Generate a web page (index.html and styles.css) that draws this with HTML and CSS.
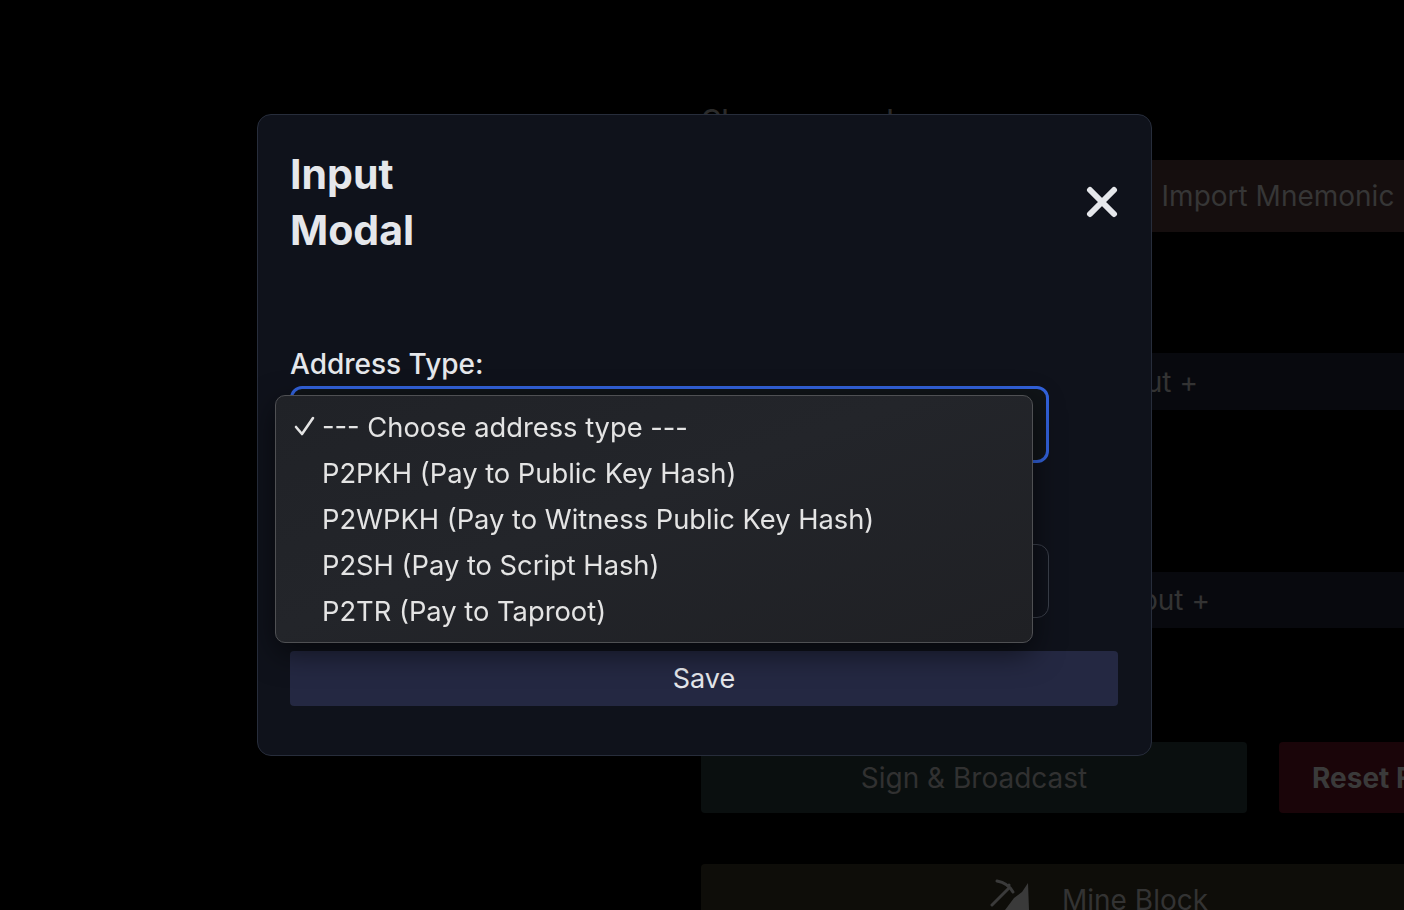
FILE: index.html
```html
<!DOCTYPE html>
<html lang="en">
<head>
<meta charset="utf-8">
<title>Input Modal</title>
<link rel="stylesheet" href="styles.css">
</head>
<body>
<div class="page">
  <h3 class="page-heading">Choose a mode</h3>
  <div class="top-row">
    <button class="bg-btn import-btn">Import Mnemonic</button>
  </div>
  <div class="bar add-input">Add Input +</div>
  <div class="bar add-output">Add Output +</div>
  <div class="actions">
    <button class="bg-btn sign-btn">Sign &amp; Broadcast</button>
    <button class="bg-btn reset-btn">Reset Form</button>
  </div>
  <div class="bar mine-bar">
    <svg class="pick" width="40" height="32" viewBox="0 0 40 32">
      <path d="M7 3 Q18 5 23 14" fill="none" stroke="#3a3a3a" stroke-width="3" stroke-linecap="round"/>
      <path d="M2 27 L19 10" fill="none" stroke="#3a3a3a" stroke-width="3" stroke-linecap="round"/>
      <circle cx="19" cy="7" r="1.6" fill="#3a3a3a"/>
      <path d="M38 5 L39 32 L15 32 L24 20 L32 14 Z" fill="#3a3a3a"/>
    </svg>
    <span>Mine Block</span>
  </div>
</div>

<div class="overlay">
  <div class="modal">
    <div class="modal-header">
      <h2 class="modal-title">Input Modal</h2>
      <button class="close-btn" aria-label="Close">
        <svg width="32" height="32" viewBox="0 0 32 32">
          <path d="M4 4 L28 28 M28 4 L4 28" stroke="#e5e7eb" stroke-width="6" stroke-linecap="round" fill="none"/>
        </svg>
      </button>
    </div>
    <div class="field">
      <label class="field-label">Address Type:</label>
      <div class="select-wrap">
        <div class="select-box"></div>
        <ul class="menu">
          <li class="menu-item checked">
            <svg class="check" width="22" height="22" viewBox="0 0 22 22">
              <path d="M2 11 L8 18 L19 2" fill="none" stroke="#e4e4e4" stroke-width="2.6" stroke-linecap="round" stroke-linejoin="round"/>
            </svg>
            --- Choose address type ---
          </li>
          <li class="menu-item">P2PKH (Pay to Public Key Hash)</li>
          <li class="menu-item">P2WPKH (Pay to Witness Public Key Hash)</li>
          <li class="menu-item">P2SH (Pay to Script Hash)</li>
          <li class="menu-item">P2TR (Pay to Taproot)</li>
        </ul>
      </div>
    </div>
    <div class="field second">
      <div class="text-box"></div>
    </div>
    <button class="save-btn">Save</button>
  </div>
</div>
</body>
</html>
```

FILE: styles.css
```css
* { box-sizing: border-box; }

html, body {
  margin: 0;
  padding: 0;
  background: #000;
  overflow: hidden;
  font-family: Inter, "Liberation Sans", sans-serif;
}

body { width: 1404px; height: 910px; }

/* background page */
.page {
  padding: 100px 0 0 701px;
  width: 1549px;
}

.page-heading {
  margin: 0;
  font-size: 28px;
  line-height: 40px;
  font-weight: 500;
  color: #2b2b2b;
}

.top-row {
  margin-top: 20px;
  height: 72px;
  display: flex;
  padding-left: 306px;
}

.bg-btn {
  border: none;
  font-family: inherit;
  font-size: 28px;
  border-radius: 4px;
  padding: 0;
}

.import-btn {
  flex: 1;
  height: 72px;
  background: #150e0e;
  color: #363636;
}

.bar {
  width: 848px;
  display: flex;
  align-items: center;
  justify-content: center;
  font-size: 28px;
  color: #333;
  border-radius: 4px;
}

.add-input {
  margin-top: 121px;
  height: 57px;
  background: #08090e;
  padding-right: 9px;
}

.add-output {
  margin-top: 162px;
  height: 56px;
  background: #08090e;
  padding-right: 8px;
}

.actions {
  margin-top: 114px;
  width: 848px;
  height: 71px;
  display: flex;
  gap: 32px;
}

.sign-btn {
  width: 546px;
  background: #0a0f0f;
  color: #313131;
}

.reset-btn {
  flex: 1;
  background: #1a0509;
  color: #3a3a3a;
  font-weight: 700;
  text-align: left;
  padding-left: 33px;
}

.mine-bar {
  margin-top: 51px;
  height: 72px;
  background: #0e0d09;
  justify-content: flex-start;
  align-items: flex-start;
  padding-left: 289px;
  gap: 32px;
}

.pick { display: block; margin-top: 14px; }

.mine-bar span { line-height: 72px; }

/* modal overlay */
.overlay {
  position: fixed;
  inset: 0;
  display: flex;
  justify-content: center;
  align-items: flex-start;
  padding-top: 114px;
  padding-left: 5px;
}

.modal {
  width: 895px;
  background: #0f121b;
  border: 1px solid #272d3b;
  border-radius: 14px;
  padding: 31px 33px 49px 32px;
}

.modal-header {
  display: flex;
  justify-content: space-between;
  align-items: center;
  margin-bottom: 86px;
}

.modal-title {
  margin: 0;
  width: 170px;
  font-size: 41px;
  line-height: 56px;
  font-weight: 700;
  color: #e5e7eb;
}

.close-btn {
  background: none;
  border: none;
  padding: 0;
  width: 32px;
  height: 32px;
  margin-top: 0;
}

.close-btn svg { display: block; }

.field { width: 759px; }

.field-label {
  display: block;
  font-size: 28px;
  line-height: 40px;
  font-weight: 500;
  color: #e5e7eb;
  margin-bottom: 2px;
}

.select-wrap { position: relative; }

.select-box {
  height: 77px;
  border: 3px solid #3262dc;
  border-radius: 12px;
  background: #101418;
}

.menu {
  position: absolute;
  left: -15px;
  top: 9px;
  width: 758px;
  height: 248px;
  margin: 0;
  padding: 9px 0;
  list-style: none;
  background: linear-gradient(160deg, #202227 0%, #23252a 45%, #1f2024 100%);
  border: 1px solid #4f5053;
  border-radius: 10px;
  box-shadow: 0 10px 30px rgba(0, 0, 0, 0.55);
  z-index: 2;
}

.menu-item {
  position: relative;
  height: 46px;
  line-height: 46px;
  padding-left: 46px;
  font-size: 27.3px;
  color: #e4e4e4;
  white-space: nowrap;
}

.check {
  position: absolute;
  left: 18px;
  top: 11px;
}

.field.second { margin-top: 81px; }

.text-box {
  height: 74px;
  border: 1px solid #3b404b;
  border-radius: 12px;
  background: #0f121b;
}

.save-btn {
  display: block;
  width: 100%;
  margin-top: 33px;
  height: 55px;
  border: none;
  border-radius: 4px;
  background: #242842;
  color: #e5e7eb;
  font-family: inherit;
  font-size: 27px;
}
```
